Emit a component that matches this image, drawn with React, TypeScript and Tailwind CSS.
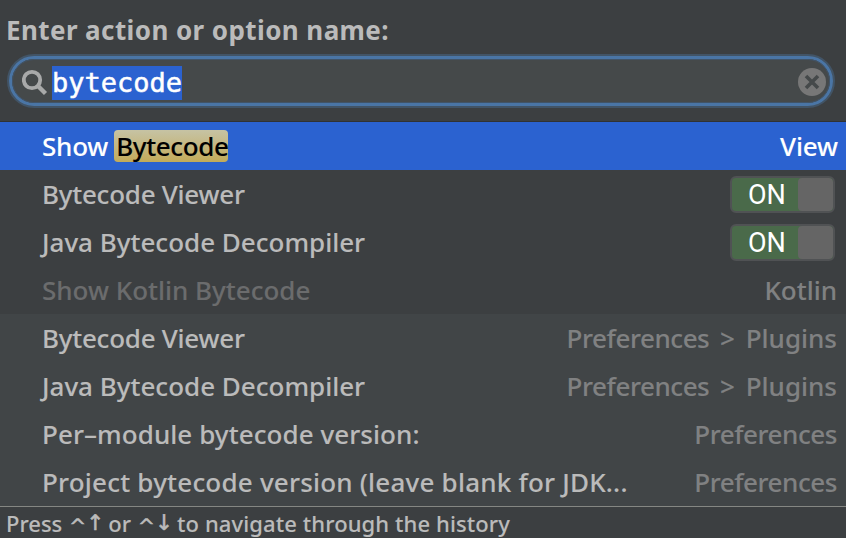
import React from "react";

type Row = {
  label: string;
  labelSpacing?: string;
  match?: string;
  hint?: string;
  hintSpacing?: string;
  subHint?: string;
  toggle?: boolean;
  state?: "selected" | "disabled";
};

const PREFERENCES = "tracking-[-0.43px]";

const actions: Row[] = [
  { label: "Show", labelSpacing: "tracking-[-0.2px]", match: "Bytecode", hint: "View", hintSpacing: "tracking-[-0.1px]", state: "selected" },
  { label: "Bytecode Viewer", labelSpacing: "tracking-[-0.25px]", toggle: true },
  { label: "Java Bytecode Decompiler", toggle: true },
  { label: "Show Kotlin Bytecode", hint: "Kotlin", state: "disabled" },
];

const options: Row[] = [
  { label: "Bytecode Viewer", labelSpacing: "tracking-[-0.25px]", hint: "Preferences", subHint: " > Plugins", hintSpacing: PREFERENCES },
  { label: "Java Bytecode Decompiler", hint: "Preferences", subHint: " > Plugins", hintSpacing: PREFERENCES },
  { label: "Per–module bytecode version:", labelSpacing: "tracking-[0.07px]", hint: "Preferences", hintSpacing: PREFERENCES },
  { label: "Project bytecode version (leave blank for JDK...", labelSpacing: "tracking-[0.21px]", hint: "Preferences", hintSpacing: PREFERENCES },
];

function Toggle() {
  return (
    <span className="mr-[11px] flex h-[37px] w-[105px] overflow-hidden rounded-[6px] border-2 border-[#505254] bg-[#4a6a4a] [-webkit-text-stroke:0px]">
      <span className="w-[66px] pl-[16px] font-[Roboto,sans-serif] text-[27px] font-normal leading-[34px] text-white">ON</span>
      <span className="flex-1 rounded-[4px] bg-[#656565]" />
    </span>
  );
}

function ResultRow({ row }: { row: Row }) {
  const selected = row.state === "selected";
  const disabled = row.state === "disabled";
  return (
    <div
      className={`flex h-12 items-center justify-between pl-[42px] whitespace-pre ${
        selected ? "bg-[#2b62d0] text-white" : disabled ? "text-[#6b6c6d]" : "text-[#bbbbbb]"
      }`}
    >
      <span className="flex items-center">
        <span className={row.labelSpacing}>{row.label}</span>
        {row.match && (
          <span className="ml-[6px] h-8 w-[114px] rounded-[4px] bg-linear-to-b from-[#c6c3a4] to-[#c3ab58] pl-[2px] leading-[32px] tracking-[-0.35px] text-black">
            {row.match}
          </span>
        )}
      </span>
      {row.toggle ? (
        <Toggle />
      ) : (
        <span className={selected ? "mr-[8px] text-white" : "mr-[9px] text-[#808182]"}>
          <span className={row.hintSpacing}>{row.hint}</span>
          {row.subHint && <span className="[word-spacing:4px]">{row.subHint}</span>}
        </span>
      )}
    </div>
  );
}

function HistoryKeys({ arrow }: { arrow: string }) {
  return (
    <span className="ml-[7px] flex font-['DejaVu_Sans',sans-serif] leading-[24px] font-normal [-webkit-text-stroke:0.6px]">
      <span className="w-[17px] pt-[5px] text-[20px]">^</span>
      <span className="w-[18px] pt-[2px] text-[21.5px]">{arrow}</span>
    </span>
  );
}

export default function App() {
  return (
    <div className="flex h-[538px] w-[846px] flex-col overflow-hidden bg-[#3c3f41] font-['Noto_Sans',sans-serif] text-[26px] font-medium [-webkit-text-stroke:0.1px]">
      <header className="h-[122px] border-b border-[#303234] pt-[12px] pl-[7px]">
        <h1 className="-ml-px h-[42px] whitespace-pre text-[26px] leading-[37px] font-bold tracking-[0.41px] text-[#bbbbbb] [-webkit-text-stroke:0px]">
          Enter action or option name:
        </h1>
        <div className="h-[54px] w-[828px] rounded-full border-2 border-[#425466] bg-[#45494a]">
          <div className="h-[50px] rounded-full border-3 border-[#4a75a5]">
            <div className="flex h-[44px] items-center rounded-full border border-[#415468] pt-[2px] pr-[3px] pl-[9px]">
              <svg className="h-[28px] w-[28px]" viewBox="0 0 28 28" fill="none" stroke="#a8a9a9" strokeWidth="3.8">
                <circle cx="10" cy="12" r="8.2" />
                <path d="M15.5 17.5L23.5 25.5" strokeWidth="4.4" />
              </svg>
              <span className="mt-px ml-[2px] h-[34px] w-[130px] bg-[#2b62d0] font-['DejaVu_Sans_Mono',monospace] text-[27px] leading-[34px] font-normal text-white [-webkit-text-stroke:0.5px]">
                bytecode
              </span>
              <svg className="ml-auto h-[28px] w-[28px]" viewBox="0 0 28 28">
                <circle cx="14" cy="14" r="14" fill="#777777" />
                <path d="M8 8L20 20M20 8L8 20" stroke="#45494a" strokeWidth="3.6" />
              </svg>
            </div>
          </div>
        </div>
      </header>
      <section>
        {actions.map((row) => (
          <ResultRow key={row.label} row={row} />
        ))}
      </section>
      <section className="bg-[#414547]">
        {options.map((row) => (
          <ResultRow key={row.label} row={row} />
        ))}
      </section>
      <footer className="flex h-8 items-center border-t border-[#858783] pt-px pl-[6px] text-[22px] whitespace-pre text-[#bbbbbb]">
        <span>Press</span>
        <HistoryKeys arrow="↑" />
        <span className="ml-[4px]">or</span>
        <HistoryKeys arrow="↓" />
        <span className="ml-[4px] tracking-[0.1px]">to navigate through the history</span>
      </footer>
    </div>
  );
}
